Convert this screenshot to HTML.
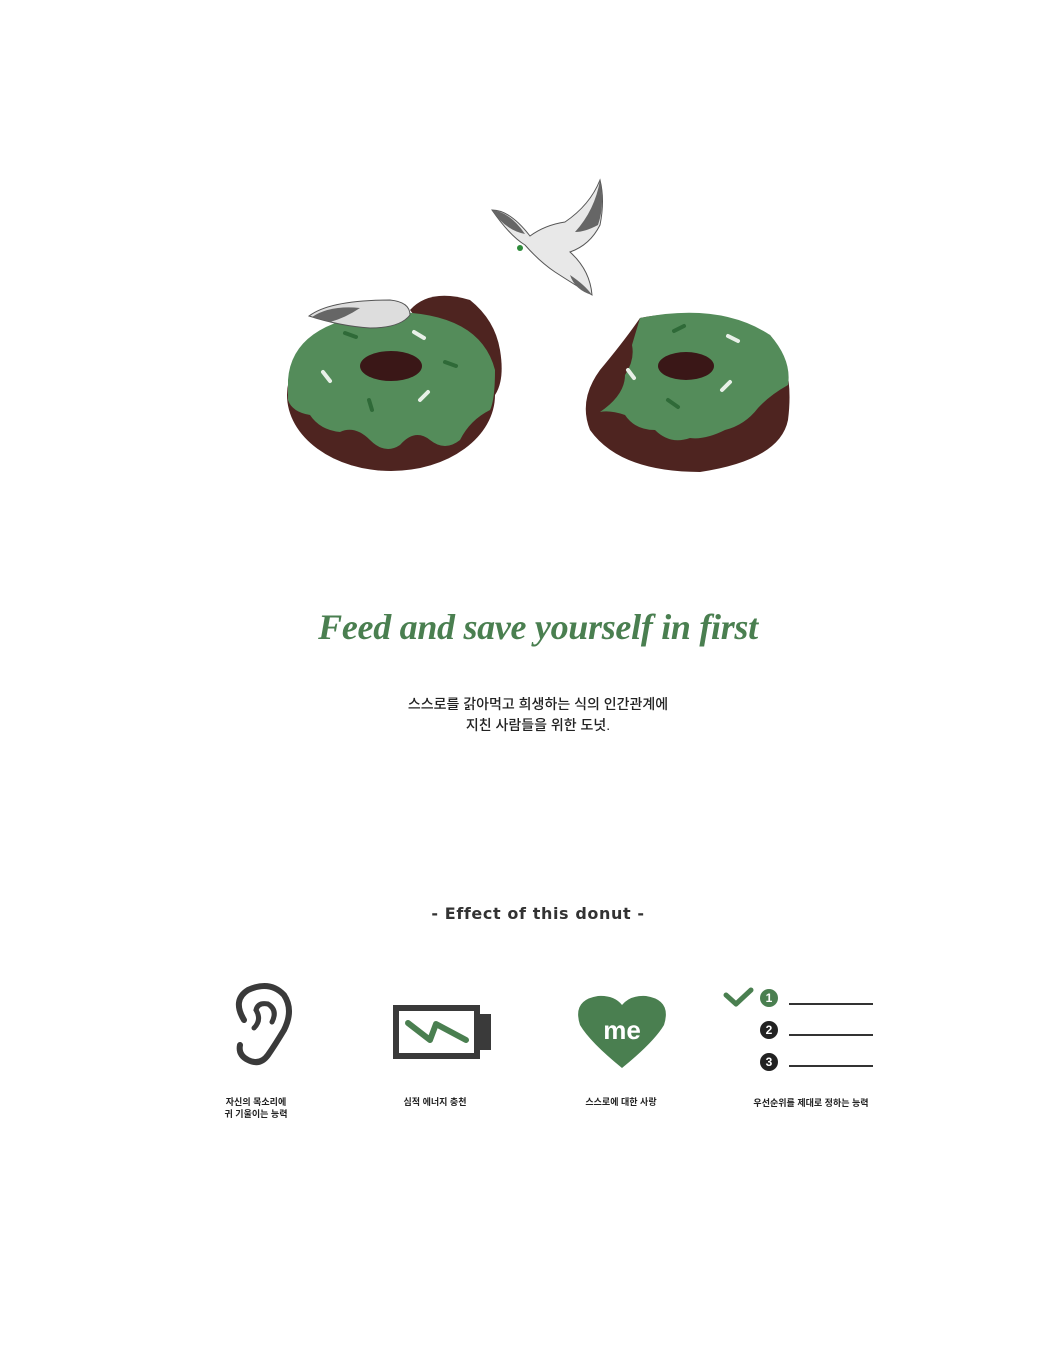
<!DOCTYPE html>
<html><head><meta charset="utf-8"><style>
html,body{margin:0;padding:0;background:#fff;}
body{width:1051px;height:1353px;position:relative;overflow:hidden;font-family:"Liberation Sans","Noto Sans CJK KR",sans-serif;}
.a{position:absolute;}
.t{position:absolute;left:0;width:1076px;text-align:center;}
.lbl{position:absolute;font-size:9px;font-weight:bold;color:#222;text-align:center;line-height:12px;font-family:"Liberation Sans","Noto Sans CJK KR",sans-serif;}
</style></head><body>
<svg class="a" style="left:0;top:0" width="1051" height="520" viewBox="0 0 1051 520">
 <path d="M410 310 Q430 288 470 300 Q495 320 500 350 Q505 380 495 395 L480 400 Z" fill="#4e2420"/>
 <ellipse cx="391" cy="395" rx="104" ry="76" fill="#4e2420"/>
 <path d="M288 380 Q292 320 390 312 Q480 312 495 370 Q495 400 490 410 Q470 420 460 440 Q445 452 430 440 Q415 428 400 445 Q385 455 370 440 Q355 425 340 432 Q320 430 310 415 Q292 412 288 400 Z" fill="#548c5a"/>
 <ellipse cx="391" cy="366" rx="31" ry="15" fill="#3a1717"/>
 <g stroke-width="4" stroke-linecap="round">
  <line x1="345" y1="333" x2="356" y2="337" stroke="#2f6a38"/>
  <line x1="414" y1="332" x2="424" y2="338" stroke="#e8f0e8"/>
  <line x1="445" y1="362" x2="456" y2="366" stroke="#2f6a38"/>
  <line x1="323" y1="372" x2="330" y2="381" stroke="#e8f0e8"/>
  <line x1="420" y1="400" x2="428" y2="392" stroke="#e8f0e8"/>
  <line x1="369" y1="400" x2="372" y2="410" stroke="#2f6a38"/>
 </g>
 <path d="M309 316 Q330 300 390 300 Q410 302 410 315 Q400 328 370 328 Q340 326 309 316 Z" fill="#ddd" stroke="#555" stroke-width="1"/>
 <path d="M312 317 Q330 305 360 308 Q345 318 330 322 Z" fill="#666"/>
 <path d="M640 318 Q700 305 770 335 Q795 365 788 420 Q780 460 700 472 Q620 472 590 430 Q578 400 600 370 Q625 340 640 318 Z" fill="#4e2420"/>
 <path d="M640 318 Q720 302 770 335 Q792 360 788 385 Q770 395 758 408 Q745 425 725 430 Q705 440 690 438 Q670 445 655 430 Q635 430 625 415 Q610 410 600 412 Q625 395 625 375 Q635 360 632 345 Z" fill="#548c5a"/>
 <ellipse cx="686" cy="366" rx="28" ry="14" fill="#3a1717"/>
 <g stroke-width="4" stroke-linecap="round">
  <line x1="674" y1="331" x2="684" y2="326" stroke="#2f6a38"/>
  <line x1="728" y1="336" x2="738" y2="341" stroke="#e8f0e8"/>
  <line x1="628" y1="370" x2="634" y2="378" stroke="#e8f0e8"/>
  <line x1="722" y1="390" x2="730" y2="382" stroke="#e8f0e8"/>
  <line x1="668" y1="400" x2="678" y2="407" stroke="#2f6a38"/>
 </g>
 <path d="M492 210 Q510 210 530 236 Q545 225 565 222 Q590 205 600 180 Q605 200 600 225 Q590 245 570 252 Q590 270 592 295 Q575 285 555 272 Q540 262 525 245 Q510 236 492 210 Z" fill="#e8e8e8" stroke="#555" stroke-width="1"/>
 <path d="M492 210 Q510 212 525 234 Q505 230 492 210 Z M600 180 Q605 205 598 225 Q585 232 575 232 Q595 210 600 180 Z M570 275 Q585 285 592 295 Q575 290 570 275 Z" fill="#666"/>
 <circle cx="520" cy="248" r="3" fill="#2e8b3a"/>
</svg>
<div class="t" style="top:606px;font-family:'Liberation Serif',serif;font-style:italic;font-weight:bold;font-size:36px;color:#4a7f50;letter-spacing:-0.3px;">Feed and save yourself in first</div>
<div class="t" style="top:694px;font-size:14px;line-height:21px;color:#222;font-weight:500;">스스로를 갉아먹고 희생하는 식의 인간관계에<br>지친 사람들을 위한 도넛.</div>
<div class="t" style="top:904px;font-size:16px;font-weight:bold;color:#333;letter-spacing:0.6px;font-family:'DejaVu Sans',sans-serif;">- Effect of this donut -</div>
<svg class="a" style="left:0;top:960px" width="1051" height="130" viewBox="0 960 1051 130">
 <path d="M244 1020 Q232 1000 248 990 Q270 980 284 995 Q294 1010 284 1030 Q275 1045 268 1055 Q260 1066 248 1060 Q238 1055 240 1045" fill="none" stroke="#3a3a3a" stroke-width="6" stroke-linecap="round"/>
 <path d="M254 1028 Q262 1020 256 1010 Q258 1002 268 1004 Q278 1010 272 1022" fill="none" stroke="#3a3a3a" stroke-width="5" stroke-linecap="round"/>
 <rect x="396" y="1008" width="81" height="48" fill="none" stroke="#3a3a3a" stroke-width="6"/>
 <rect x="480" y="1014" width="11" height="36" fill="#3a3a3a"/>
 <path d="M408 1023 L430 1040 L436 1024 L466 1040" fill="none" stroke="#4a7f50" stroke-width="6" stroke-linecap="round" stroke-linejoin="round"/>
 <path d="M622 1068 Q590 1042 580 1025 Q572 1000 598 996 Q614 995 622 1005 Q630 995 646 996 Q672 1000 664 1025 Q654 1042 622 1068 Z" fill="#4a7f50"/>
 <text x="622" y="1039" text-anchor="middle" font-family="Liberation Sans,sans-serif" font-weight="bold" font-size="26" fill="#fff">me</text>
 <path d="M726 995 L736 1004 L751 990" fill="none" stroke="#4a7f50" stroke-width="5" stroke-linecap="round" stroke-linejoin="round"/>
 <circle cx="769" cy="998" r="9" fill="#4a7f50"/>
 <circle cx="769" cy="1030" r="9" fill="#222"/>
 <circle cx="769" cy="1062" r="9" fill="#222"/>
 <g font-family="Liberation Sans,sans-serif" font-weight="bold" font-size="12" fill="#fff" text-anchor="middle">
  <text x="769" y="1002">1</text><text x="769" y="1034">2</text><text x="769" y="1066">3</text>
 </g>
 <g stroke="#333" stroke-width="2"><line x1="789" y1="1004" x2="873" y2="1004"/><line x1="789" y1="1035" x2="873" y2="1035"/><line x1="789" y1="1066" x2="873" y2="1066"/></g>
</svg>
<div class="lbl" style="left:206px;top:1096px;width:100px;">자신의 목소리에<br>귀 기울이는 능력</div>
<div class="lbl" style="left:385px;top:1096px;width:100px;">심적 에너지 충천</div>
<div class="lbl" style="left:571px;top:1096px;width:100px;">스스로에 대한 사랑</div>
<div class="lbl" style="left:741px;top:1097px;width:140px;">우선순위를 제대로 정하는 능력</div>
</body></html>
